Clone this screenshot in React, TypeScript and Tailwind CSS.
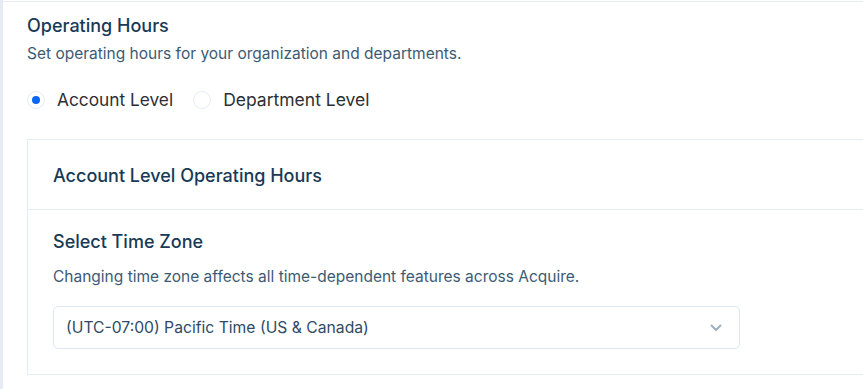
import React from "react";

export default function App() {
  return (
    <div className="flex h-[389px] w-[863px] overflow-hidden bg-white" style={{ fontFamily: "Inter, 'Noto Sans', sans-serif" }}>
      <div className="w-[3px] shrink-0 bg-[#e6ebf3]" />
      <div className="flex-1 min-w-0 mt-px border-t border-[#e6ebf3] pl-6">
        <h1 className="mt-[12px] text-[18px] leading-[24px] font-medium text-[#173a57]">Operating Hours</h1>
        <p className="mt-[5px] text-[15.5px] leading-[22px] text-[#3d5a74]">Set operating hours for your organization and departments.</p>
        <div className="mt-[23px] flex items-center h-[24px]">
          <label className="flex items-center">
            <span className="flex h-[18px] w-[18px] items-center justify-center rounded-full border border-[#e4ecf7] bg-white">
              <span className="h-[8px] w-[8px] rounded-full bg-[#0a66f5]" />
            </span>
            <span className="ml-[12px] text-[17.3px] text-[#2b2f33]">Account Level</span>
          </label>
          <label className="ml-[20px] flex items-center">
            <span className="h-[18px] w-[18px] rounded-full border border-[#e4ecf7] bg-white" />
            <span className="ml-[12px] text-[17.5px] text-[#2b2f33]">Department Level</span>
          </label>
        </div>
        <div className="mt-[27px] border-l border-t border-[#e4ecf5]">
          <div className="flex h-[70px] items-center border-b border-[#e4ecf5] px-[25px] pt-[2px]">
            <h2 className="text-[18px] font-medium text-[#173a57]">Account Level Operating Hours</h2>
          </div>
          <div className="h-[165px] border-b border-[#e4ecf5] px-[25px] pt-[20px]">
            <h3 className="text-[18px] leading-[24px] font-medium text-[#173a57]">Select Time Zone</h3>
            <p className="mt-[12px] text-[15.5px] leading-[22px] text-[#3d5a74]">Changing time zone affects all time-dependent features across Acquire.</p>
            <div className="mt-[18px] flex h-[43px] w-[687px] items-center justify-between rounded-[5px] border border-[#dce8f7] pl-[12px] pr-[17px]">
              <span className="text-[15.7px] text-[#2e4a66]">(UTC-07:00) Pacific Time (US &amp; Canada)</span>
              <svg width="12" height="8" viewBox="0 0 12 8" fill="none">
                <path d="M1.5 1.5 L6 6 L10.5 1.5" stroke="#9fb0c2" strokeWidth="2" strokeLinecap="round" strokeLinejoin="round" />
              </svg>
            </div>
          </div>
        </div>
      </div>
    </div>
  );
}
